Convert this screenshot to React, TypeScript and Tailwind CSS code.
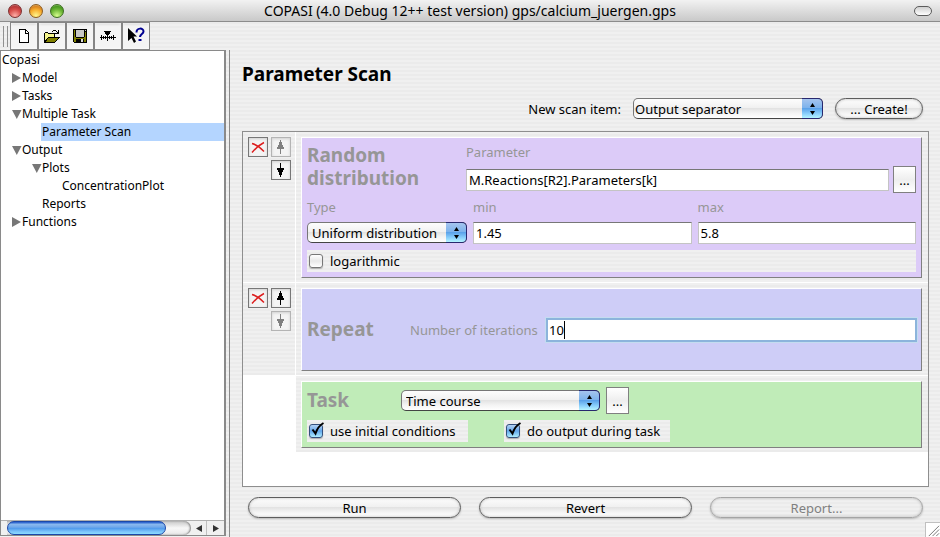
import { useState } from "react";
import type { ReactNode } from "react";

const STRIPES = "bg-[repeating-linear-gradient(to_bottom,#f0f0f0_0_2px,#ebebeb_2px_4px)]";
const GEL = "bg-[linear-gradient(to_bottom,#fdfdfd_0%,#f1f1f1_45%,#e3e3e3_50%,#f4f4f4_75%,#ffffff_100%)]";

function NewIcon() {
  return (
    <svg width="16" height="16" viewBox="0 0 16 16" shapeRendering="crispEdges" aria-hidden="true">
      <path d="M3 1h7v1h1v1h1v1h1v11H3z" fill="#000" />
      <path d="M4 2h5v4h3v8H4z" fill="#fff" />
      <path d="M10 3h1v1h1v1h-2z" fill="#fff" />
    </svg>
  );
}

function OpenIcon() {
  return (
    <svg width="18" height="16" viewBox="0 0 18 16" shapeRendering="crispEdges" aria-hidden="true">
      <path d="M1 5h1V4h3v1h7v4h5v1h-1v1h-1v1h-1v1h-1v1h-1v1H1z" fill="#000" />
      <path d="M2 5h3v1h6v3H5v1H4v1H3v1H2z" fill="#f4f48c" />
      <path d="M5 10h10v1h-1v1h-1v1h-1v1H3v-1h1v-2h1z" fill="#808000" />
      <path d="M10 2h3v1h-3zM9 3h1v1H9zM13 3h1v1h1V2h1v4h-4V5h2V4h-1z" fill="#000" />
    </svg>
  );
}

function SaveIcon() {
  return (
    <svg width="16" height="16" viewBox="0 0 16 16" shapeRendering="crispEdges" aria-hidden="true">
      <path d="M1 1h14v14H2v-1H1z" fill="#000" />
      <path d="M2 2h1v7h1v1h8V9h1V4h1v10H2z" fill="#808000" />
      <path d="M4 2h8v7H4zM13 2h1v1h-1z" fill="#c8c8c8" />
      <path d="M4 11h8v3H4z" fill="#000" />
      <path d="M9 11h2v3H9z" fill="#dcdcdc" />
    </svg>
  );
}

function SliderIcon() {
  return (
    <svg width="16" height="16" viewBox="0 0 16 16" shapeRendering="crispEdges" aria-hidden="true">
      <path d="M4 3h7v1h-1v2H9v1H8v2H7V7H6V6H5V4H4z" fill="#000" />
      <path d="M0 9h16v1H0zM1 7h1v5H1zM3 8h1v3H3zM5 8h1v3H5zM7 7h1v6H7zM9 8h1v3H9zM11 8h1v3h-1zM13 7h1v5h-1z" fill="#000" />
    </svg>
  );
}

function HelpIcon() {
  return (
    <svg width="18" height="18" viewBox="0 0 18 18" aria-hidden="true">
      <path d="M1 1l9 8.500H6.500l2.500 5-2 1.500-2.500-5L1 14z" fill="#000" />
      <path d="M9.500 5.500c0-5 7-5 7-1 0 2.500-3.500 2.500-3.500 5.500" fill="none" stroke="#000090" strokeWidth="2" />
      <path d="M11.500 12h3v2h-3z" fill="#000090" />
    </svg>
  );
}

function ArrowIcon({ down = false }: { down?: boolean }) {
  return (
    <svg width="8" height="14" viewBox="0 0 8 14" shapeRendering="crispEdges" fill="currentColor" aria-hidden="true">
      {down ? (
        <path d="M3 0h1v5h3v2H6v2H5v3H4v2H3v-2H2V9H1V7H0V5h3z" />
      ) : (
        <path d="M3 0h1v2h1v3h1v2h1v2H4v5H3V9H0V7h1V5h1V2h1z" />
      )}
    </svg>
  );
}

function CrossIcon() {
  return (
    <svg width="14" height="12" viewBox="0 0 14 12" fill="none" stroke="#dc1e1e" strokeWidth="1.500" aria-hidden="true">
      <path d="M1 2.500C5 3.500 10 7.500 13 10.500M13 1.500C8 4 4 8 1 11.500" />
    </svg>
  );
}

function ToolButton({ label, children }: { label: string; children: ReactNode }) {
  return (
    <button
      type="button"
      aria-label={label}
      className="flex h-7 w-7 items-center justify-center border border-[#858585] bg-[#f4f4f4] shadow-[inset_0_0_3px_#ffffff,inset_0_2px_2px_#dcdcdc]"
    >
      {children}
    </button>
  );
}

function SmallButton({ label, disabled = false, children }: { label: string; disabled?: boolean; children: ReactNode }) {
  return (
    <button
      type="button"
      aria-label={label}
      disabled={disabled}
      className="flex size-5 items-center justify-center border border-[#777777] bg-[#f4f4f4] text-black shadow-[inset_0_1px_3px_#d0d0d0] disabled:border-[#b4b4b4] disabled:text-[#808080]"
    >
      {children}
    </button>
  );
}

function DotsButton({ label }: { label: string }) {
  return (
    <button
      type="button"
      aria-label={label}
      className="h-[27px] w-[23px] shrink-0 border border-[#808080] bg-linear-to-b from-white via-[#eeeeee] to-white leading-5"
    >
      ...
    </button>
  );
}

function Select({ id, label, options, inset }: { id: string; label?: string; options: string[]; inset?: boolean }) {
  return (
    <div className="relative h-[21px] w-full">
      <select
        id={id}
        aria-label={label}
        className={
          "h-full w-full appearance-none rounded-[5px] border border-[#777777] border-b-[#444444] pr-5 leading-[18px] outline-none " +
          GEL +
          (inset ? " pl-1" : " pl-px")
        }
      >
        {options.map((o) => (
          <option key={o}>{o}</option>
        ))}
      </select>
      <span className="pointer-events-none absolute inset-y-0 right-0 flex w-[21px] items-center justify-center rounded-r-[5px] border border-l-0 border-[#28286e] bg-[linear-gradient(to_bottom,#a5c4ee_0%,#7eb3ec_45%,#5ba2ea_50%,#8fd4fd_80%,#b5f4ff_100%)]">
        <svg width="7" height="12" viewBox="0 0 7 12" aria-hidden="true">
          <path d="M3.500 0L6 4H1zM3.500 12L1 8h5z" fill="#000" />
        </svg>
      </span>
    </div>
  );
}

function CheckBox({ label, initial = false }: { label: string; initial?: boolean }) {
  const [on, setOn] = useState(initial);
  return (
    <label className={"flex h-[22px] items-center gap-[7px] pl-0.5 " + STRIPES}>
      <span className="relative flex size-[14px]">
        <input
          type="checkbox"
          checked={on}
          onChange={() => setOn(!on)}
          className="size-[14px] appearance-none rounded-[3px] border border-[#777777] bg-linear-to-b from-white via-[#e8e8e8] to-white shadow-[0_1px_1px_#b0b0b0] checked:border-[#34507c] checked:from-[#b4d2f4] checked:via-[#62a6ea] checked:to-[#aeeeff]"
        />
        {on && (
          <svg className="pointer-events-none absolute -top-0.5 left-0" width="16" height="14" viewBox="0 0 16 14" aria-hidden="true">
            <path d="M3.500 7.500L6.500 11.500C8 7 11 3 14.500 1" fill="none" stroke="#000" strokeWidth="2" />
          </svg>
        )}
      </span>
      {label}
    </label>
  );
}

const FIELD =
  "h-[22px] w-full min-w-0 border border-[#c4c4c4] border-t-[#777777] bg-white px-0.5 outline-none";

function TextField({ id, value }: { id: string; value: string }) {
  const [text, setText] = useState(value);
  return <input id={id} type="text" value={text} onChange={(e) => setText(e.target.value)} className={FIELD} />;
}

function Pill({ children, disabled = false }: { children: ReactNode; disabled?: boolean }) {
  return (
    <button
      type="button"
      disabled={disabled}
      className={
        "h-[21px] w-full rounded-full border border-[#5c5c5c] leading-[18px] shadow-[0_1px_2px_#b8b8b8,inset_0_0_3px_#b8b8b8] disabled:border-[#a4a4a4] disabled:bg-none disabled:text-[#808080] " +
        GEL
      }
    >
      {children}
    </button>
  );
}

function ItemRow({ controls, color, children }: { controls?: ReactNode; color: string; children: ReactNode }) {
  return (
    <div className="flex">
      <div className={"flex w-[53px] shrink-0 justify-start " + (controls ? "border-r border-b border-white p-[5px] " + STRIPES : "")}>
        {controls}
      </div>
      <div className={"min-w-0 flex-1 p-[5px] pr-1.5 pb-1 " + STRIPES + (controls ? " border-b border-white" : "")}>
        <div className={"border border-t-white border-r-[#808080] border-b-[#808080] border-l-white px-[5px] " + color}>{children}</div>
      </div>
    </div>
  );
}

function Controls({ first = false }: { first?: boolean }) {
  return (
    <div className="flex gap-[3px]">
      <SmallButton label="Delete item">
        <CrossIcon />
      </SmallButton>
      <div className="flex flex-col gap-[3px]">
        <SmallButton label="Move up" disabled={first}>
          <ArrowIcon />
        </SmallButton>
        <SmallButton label="Move down" disabled={!first}>
          <ArrowIcon down />
        </SmallButton>
      </div>
    </div>
  );
}

const TREE = [
  { label: "Copasi", pad: "pl-px", mark: "" },
  { label: "Model", pad: "pl-[11px]", mark: "closed" },
  { label: "Tasks", pad: "pl-[11px]", mark: "closed" },
  { label: "Multiple Task", pad: "pl-[11px]", mark: "open" },
  { label: "Parameter Scan", pad: "pl-10", mark: "", selected: true },
  { label: "Output", pad: "pl-[11px]", mark: "open" },
  { label: "Plots", pad: "pl-[31px]", mark: "open" },
  { label: "ConcentrationPlot", pad: "pl-[61px]", mark: "" },
  { label: "Reports", pad: "pl-[41px]", mark: "" },
  { label: "Functions", pad: "pl-[11px]", mark: "closed" },
];

function Tree() {
  return (
    <aside className="flex w-[226px] shrink-0 flex-col border border-r-2 border-[#8a8a8a] bg-white">
      <ul className="flex-1 text-[12px]">
        {TREE.map((n) => (
          <li key={n.label} className={"flex h-[18px] items-center leading-[18px] " + n.pad}>
            {n.mark && (
              <svg width="10" height="10" viewBox="0 0 10 10" fill="#777777" aria-hidden="true">
                {n.mark === "open" ? <path d="M0 1h9.500L4.800 10z" /> : <path d="M0 0l9 5-9 5z" />}
              </svg>
            )}
            <span className={n.selected ? "flex-1 bg-[#b4d5ff] pl-px" : ""}>{n.label}</span>
          </li>
        ))}
      </ul>
      <div className="flex h-[15px] border-t border-[#b0b0b0] bg-[#f0f0f0] pl-1.5">
        <div className="flex flex-1 rounded-r-full bg-linear-to-b from-[#c8c8c8] via-[#f8f8f8] to-[#e8e8e8] pr-[25px] shadow-[inset_-1px_0_2px_#808080]">
          <div className="flex-1 rounded-full border border-[#1c48a8] bg-[linear-gradient(to_bottom,#1d55c8_0%,#8ab8ee_20%,#6ca6ea_45%,#4d96ea_50%,#7cc4fa_80%,#8adcff_100%)]" />
        </div>
        <button type="button" aria-label="Scroll left" className="flex w-4 items-center justify-center border-r border-[#c0c0c0]">
          <svg width="6" height="7" viewBox="0 0 6 7" aria-hidden="true"><path d="M6 0v7L0 3.500z" fill="#333" /></svg>
        </button>
        <button type="button" aria-label="Scroll right" className="flex w-[17px] items-center justify-center">
          <svg width="6" height="7" viewBox="0 0 6 7" aria-hidden="true"><path d="M0 0v7l6-3.500z" fill="#333" /></svg>
        </button>
      </div>
    </aside>
  );
}

const TITLE = "text-[19px] leading-[23px] font-bold text-[#969696]";
const CAPTION = "text-[#969696]";

export default function App() {
  const [count, setCount] = useState("10");
  return (
    <div className={"flex h-screen min-h-[537px] flex-col font-['Noto_Sans','Lucida_Grande',sans-serif] text-[13px] leading-[18px] text-black " + STRIPES}>
      <header className="flex h-[22px] shrink-0 items-center rounded-t-md border-b border-[#8c8c8c] bg-linear-to-b from-[#f2f2f2] to-[#c9c9c9] px-2">
        <div className="flex w-16 gap-[7px]">
          <span className="size-[14px] rounded-full border border-[#7c3030] bg-[radial-gradient(circle_at_50%_90%,#ffb0a8_0%,#d8504c_50%,#b83838_75%,#e8b0b0_100%)]" />
          <span className="size-[14px] rounded-full border border-[#8c5c20] bg-[radial-gradient(circle_at_50%_90%,#fff890_0%,#f8b030_50%,#d88420_75%,#f0d8a0_100%)]" />
          <span className="size-[14px] rounded-full border border-[#3c6c20] bg-[radial-gradient(circle_at_50%_90%,#d8ff90_0%,#70b838_50%,#489820_75%,#c0e0a0_100%)]" />
        </div>
        <h1 className="flex-1 text-center text-[14px]">COPASI (4.0 Debug 12++ test version) gps/calcium_juergen.gps</h1>
        <div className="flex w-16 justify-end">
          <button type="button" aria-label="Toggle toolbar" className="h-[10px] w-[18px] rounded-full border border-[#5c5c5c] bg-linear-to-b from-[#d0d0d0] to-white" />
        </div>
      </header>

      <div className="flex h-7 shrink-0 pl-[3px]" role="toolbar">
        <span className="mt-1 mr-0.5 h-[21px] w-[5px] border-x border-[#909090]" />
        <ToolButton label="New"><NewIcon /></ToolButton>
        <ToolButton label="Open"><OpenIcon /></ToolButton>
        <ToolButton label="Save"><SaveIcon /></ToolButton>
        <ToolButton label="Sliders"><SliderIcon /></ToolButton>
        <ToolButton label="What's this"><HelpIcon /></ToolButton>
      </div>

      <div className="flex min-h-0 flex-1">
        <div className="flex border-r border-[#8a8a8a] pr-[3px] pb-px">
          <Tree />
        </div>

        <main className="flex min-w-0 flex-1 flex-col pl-3">
          <h2 className="mt-3 text-[19px] leading-6 font-bold">Parameter Scan</h2>
          <div className="mt-3 flex items-center justify-end gap-3 pr-[17px]">
            <label htmlFor="new-item">New scan item:</label>
            <div className="w-[190px]">
              <Select id="new-item" options={["Output separator", "Parameter scan", "Repeat", "Random distribution"]} />
            </div>
            <div className="w-[88px]">
              <Pill>... Create!</Pill>
            </div>
          </div>

          <section className="mt-3 mr-[11px] flex-1 border border-[#8e8e8e] bg-white">
            <ItemRow controls={<Controls first />} color="bg-[#dccbf8]">
              <div className="flex">
                <h3 className={TITLE + " w-[159px] shrink-0 pt-1.5"}>Random distribution</h3>
                <div className="min-w-0 flex-1">
                  <label htmlFor="param" className={CAPTION + " block pt-[5px]"}>Parameter</label>
                  <div className="mt-[5px] flex items-center gap-1">
                    <TextField id="param" value="M.Reactions[R2].Parameters[k]" />
                    <DotsButton label="Choose parameter" />
                  </div>
                </div>
              </div>
              <div className="mt-[5px] grid grid-cols-[160px_1fr_1fr] gap-x-1.5 gap-y-1.5">
                <label htmlFor="type" className={CAPTION}>Type</label>
                <label htmlFor="min" className={CAPTION}>min</label>
                <label htmlFor="max" className={CAPTION}>max</label>
                <Select id="type" inset options={["Uniform distribution", "Normal distribution"]} />
                <TextField id="min" value="1.45" />
                <TextField id="max" value="5.8" />
              </div>
              <div className="mt-1.5 mb-[5px]">
                <CheckBox label="logarithmic" />
              </div>
            </ItemRow>

            <ItemRow controls={<Controls />} color="bg-[#cecdf7]">
              <div className="flex h-[81px] items-center">
                <h3 className={TITLE + " w-[103px] shrink-0"}>Repeat</h3>
                <label htmlFor="count" className={CAPTION + " w-[137px] shrink-0"}>Number of iterations</label>
                <div className="grid flex-1 items-center px-px">
                  <input
                    id="count"
                    type="text"
                    value={count}
                    onChange={(e) => setCount(e.target.value)}
                    className="col-start-1 row-start-1 h-5 w-full min-w-0 bg-white px-px shadow-[0_0_0_2px_#8cb4dc,0_0_0_3px_#c4dcf0] outline-none"
                  />
                  <span className="pointer-events-none col-start-1 row-start-1 flex pl-px" aria-hidden="true">
                    <span className="invisible">{count}</span>
                    <span className="w-px bg-black" />
                  </span>
                </div>
              </div>
            </ItemRow>

            <ItemRow color="bg-[#c0ecb8]">
              <div className="flex items-center pt-[5px]">
                <h3 className={TITLE + " w-[94px] shrink-0"}>Task</h3>
                <div className="mr-1.5 w-[199px]">
                  <Select id="task" label="Task" inset options={["Time course", "Steady state"]} />
                </div>
                <DotsButton label="Edit task" />
              </div>
              <div className="mt-1.5 mb-[5px] grid grid-cols-[161px_166px] gap-9">
                <CheckBox label="use initial conditions" initial />
                <CheckBox label="do output during task" initial />
              </div>
            </ItemRow>
          </section>

          <div className="mt-2.5 flex items-end">
            <div className="mb-[19px] grid flex-1 grid-cols-3 gap-[18px] pl-1.5">
              <Pill>Run</Pill>
              <Pill>Revert</Pill>
              <Pill disabled>Report...</Pill>
            </div>
            <div className="flex w-[17px] justify-end">
              <svg width="15" height="15" viewBox="0 0 15 15" className="border-t border-l border-[#c0c0c0] bg-white" aria-hidden="true">
                <path d="M3 14L14 3M7 14l7-7M11 14l3-3" stroke="#707070" />
              </svg>
            </div>
          </div>
        </main>
      </div>
    </div>
  );
}
